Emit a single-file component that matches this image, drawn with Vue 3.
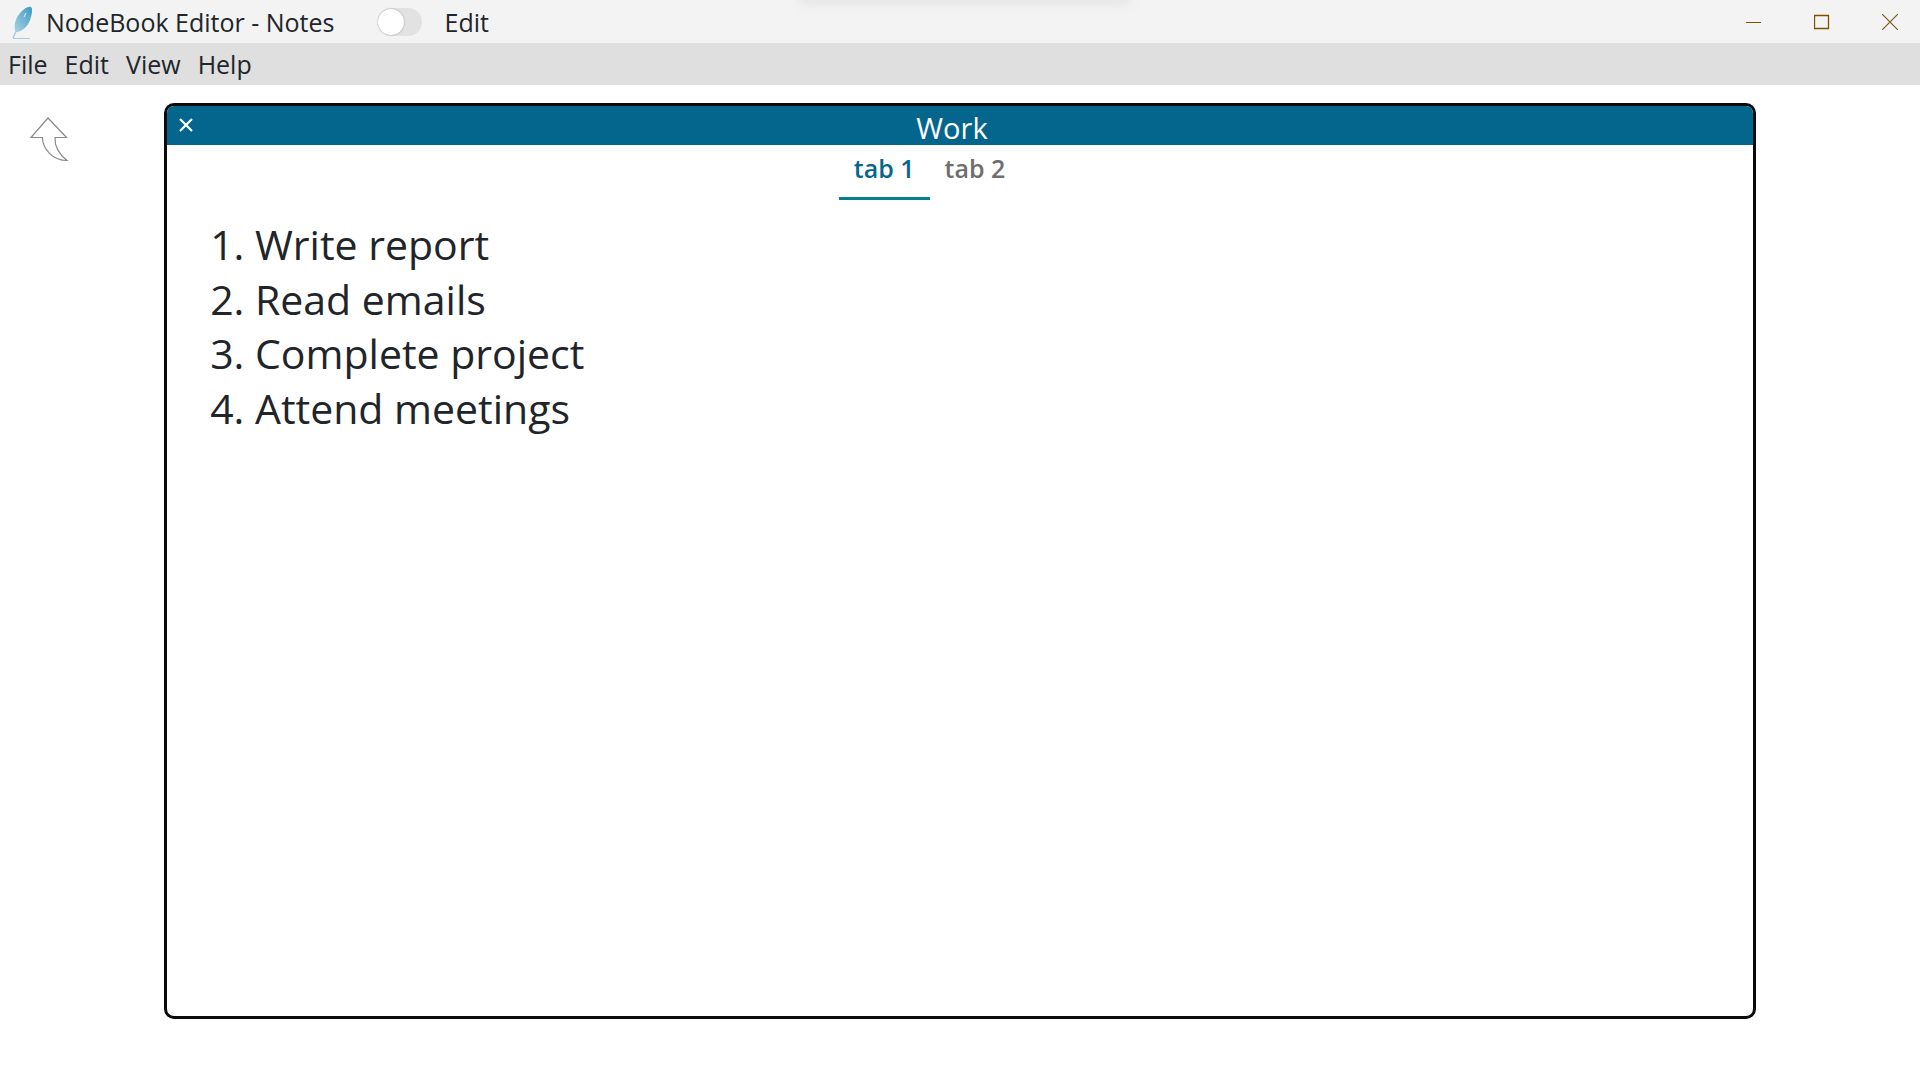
<script setup>
const menus = ["File", "Edit", "View", "Help"];
const tabs = ["tab 1", "tab 2"];
const notes = ["Write report", "Read emails", "Complete project", "Attend meetings"];
</script>

<template>
  <div class="app">
    <header class="titlebar">
      <svg class="logo" width="32" height="38" viewBox="0 0 32 38">
        <defs>
          <linearGradient id="feather" x1="0" y1="1" x2="1" y2="0">
            <stop offset="0" stop-color="#a9d2e2" />
            <stop offset="1" stop-color="#3a9bc2" />
          </linearGradient>
        </defs>
        <path d="M12 29C9 24 11 15 17 9C20 6 24 3 27 4C29 5 28 12 26 17C24 23 18 29 12 29Z" fill="url(#feather)" />
        <path d="M9 35L13 26" stroke="#a4cfe0" stroke-width="1.5" fill="none" />
        <path d="M9 35.5H26" stroke="#a4cfe0" stroke-width="1" fill="none" />
        <path d="M22 10L20 14" stroke="#e8f4f8" stroke-width="1" fill="none" />
      </svg>
      <span class="app-title">NodeBook Editor - Notes</span>
      <span class="switch"><span class="knob"></span></span>
      <span class="mode">Edit</span>
      <div class="win-controls">
        <svg width="16" height="16" viewBox="0 0 16 16"><path d="M0 8.5H15" stroke="#7f4f00" stroke-width="1" /></svg>
        <svg width="16" height="16" viewBox="0 0 16 16"><path d="M.5 1.5H14.5V14.5H.5Z" stroke="#7f4f00" stroke-width="1.3" fill="none" /></svg>
        <svg width="16" height="16" viewBox="0 0 16 16"><path d="M0 0L16 16M16 0L0 16" stroke="#7f5a1c" stroke-width="1.2" /></svg>
      </div>
    </header>

    <nav class="menubar">
      <span v-for="m in menus" :key="m" class="menu-item">{{ m }}</span>
    </nav>

    <main class="workspace">
      <aside class="rail">
        <svg width="40" height="46" viewBox="0 0 40 46">
          <path d="M19 1L2 20.500H13.500C13.500 32 24 43.500 38 43.500C31 38 25.500 30 26 20.500H37.500Z" fill="#fff" stroke="#8a8a8a" stroke-width="1.200" />
        </svg>
      </aside>

      <section class="panel">
        <div class="panel-head">
          <svg class="close" width="16" height="16" viewBox="0 0 16 16"><path d="M2 2L14 14M14 2L2 14" stroke="#fff" stroke-width="2.200" /></svg>
          <span class="panel-title">Work</span>
        </div>
        <div class="tabs">
          <span v-for="(t, i) in tabs" :key="t" class="tab" :class="{ active: i === 0 }">{{ t }}</span>
        </div>
        <ol class="notes">
          <li v-for="n in notes" :key="n">{{ n }}</li>
        </ol>
      </section>
    </main>
  </div>
</template>

<style>
html, body {
  margin: 0;
  background: #fff;
}
</style>

<style scoped>
.app {
  width: 1920px;
  height: 1080px;
  overflow: hidden;
  display: flex;
  flex-direction: column;
  font-family: "Open Sans", "Noto Sans", sans-serif;
  color: #212529;
  background: #fff;
}

.titlebar {
  height: 43px;
  flex: none;
  display: flex;
  align-items: center;
  background: #f3f3f3;
  position: relative;
  font-size: 25px;
}

.titlebar::before {
  content: "";
  position: absolute;
  top: -6px;
  left: 800px;
  width: 330px;
  height: 10px;
  background: #e4e4e4;
  filter: blur(5px);
}

.logo {
  margin-left: 4px;
  flex: none;
}

.app-title {
  margin-left: 10px;
}

.switch {
  margin-left: 44px;
  width: 44px;
  height: 28px;
  border-radius: 14px;
  background: #e2e2e2;
  display: flex;
  align-items: center;
}

.knob {
  width: 26px;
  height: 26px;
  border-radius: 50%;
  background: #fff;
  box-shadow: 0 0 2px rgba(0, 0, 0, 0.35);
}

.mode {
  margin-left: 22px;
}

.win-controls {
  margin-left: auto;
  padding-right: 22px;
  display: flex;
  gap: 52px;
}

.menubar {
  height: 42px;
  flex: none;
  display: flex;
  align-items: center;
  gap: 17px;
  padding-left: 8px;
  background: #dfdfdf;
  font-size: 25px;
}

.workspace {
  flex: 1;
  display: flex;
  padding-top: 18px;
}

.rail {
  width: 164px;
  flex: none;
  padding: 14px 0 0 29px;
  box-sizing: border-box;
}

.panel {
  width: 1592px;
  height: 916px;
  box-sizing: border-box;
  border: 3px solid #0b0b0b;
  border-radius: 10px;
  overflow: hidden;
}

.panel-head {
  height: 39px;
  background: #05668d;
  color: #fff;
  display: flex;
  align-items: center;
  justify-content: center;
  position: relative;
  font-size: 29px;
}

.close {
  position: absolute;
  left: 11px;
  top: 11px;
}

.panel-title {
  margin-top: 4px;
  margin-left: -16px;
}

.tabs {
  display: flex;
  justify-content: center;
  margin-left: -61px;
  font-size: 25px;
  font-weight: 600;
}

.tab {
  padding: 6px 15px 12px;
  color: #6e6e6e;
  border-bottom: 3px solid transparent;
}

.active {
  color: #05668d;
  border-bottom-color: #028090;
}

.notes {
  margin: 17px 0 0;
  padding-left: 88px;
  font-size: 41px;
  line-height: 54.500px;
}
</style>
